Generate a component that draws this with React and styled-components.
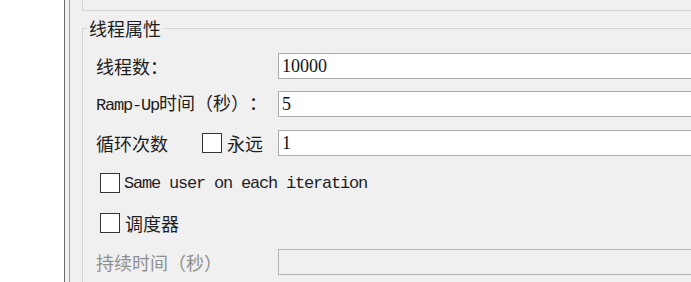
import React from 'react';
import styled, { createGlobalStyle } from 'styled-components';

const GlobalStyle = createGlobalStyle`
  html, body { margin:0; padding:0; background:#f0f0f0; }
  body {
    font-family: "Noto Sans CJK SC", "Liberation Sans", sans-serif;
    text-spacing-trim: space-all;
  }
`;

const Page = styled.div`
  display:flex;
  width:691px;
  height:282px;
  overflow:hidden;
  background:#f0f0f0;
`;

const Blank = styled.div`
  width:64px;
  flex:none;
  background:#fff;
`;

const Splitter = styled.div`
  width:4px;
  flex:none;
  border-left:1px solid #6e6e6e;
  border-right:1px solid #a0a0a0;
  background:#f0f0f0;
`;

const Content = styled.div`
  flex:1;
  min-width:0;
  padding-left:12px;
`;

const TopBox = styled.div`
  height:10px;
  margin-right:-40px;
  border-left:1px solid #d5d5d5;
  border-bottom:1px solid #d5d5d5;
`;

const Group = styled.fieldset`
  margin:7px -40px 0 0;
  padding:15px 0 20px 13px;
  min-inline-size:0;
  border:1px solid #d5d5d5;
  display:flex;
  flex-direction:column;
`;

const Legend = styled.legend`
  margin-left:-9px;
  padding:0 2px;
  font-size:18px;
  line-height:20px;
  color:#1e1e1e;
`;

const Row = styled.div`
  display:flex;
  align-items:center;
  height:26px;
  margin-top:${props => props.gap || 0}px;
  padding-left:${props => props.indent || 0}px;
`;

const LabelCell = styled.div`
  width:182px;
  flex:none;
  display:flex;
  align-items:center;
`;

const Label = styled.span`
  font-size:18px;
  line-height:20px;
  white-space:nowrap;
  color:${props => props.disabled ? '#8f8f8f' : '#1e1e1e'};
`;

const Latin = styled.span`
  font-family:"Liberation Mono", monospace;
  font-size:17px;
  letter-spacing:-1.2px;
`;

const Check = styled.span`
  display:inline-block;
  flex:none;
  box-sizing:border-box;
  width:20px;
  height:20px;
  border:1px solid #333;
  background:#fff;
  margin-left:${props => props.offset || 0}px;
  margin-right:${props => props.space || 4}px;
`;

const Field = styled.input`
  flex:1;
  min-width:0;
  box-sizing:border-box;
  height:26px;
  margin:0;
  padding:0 3px;
  border:1px solid ${props => props.disabled ? '#b4b4b4' : '#ababab'};
  background:${props => props.disabled ? '#f0f0f0' : '#fff'};
  font-family:"Liberation Serif", serif;
  font-size:18px;
  color:#141414;
  outline:none;
`;

const MonoText = styled.span`
  font-family:"Liberation Mono", monospace;
  font-size:17px;
  letter-spacing:-1.2px;
  color:#1e1e1e;
  white-space:nowrap;
`;

export default function App() {
  return (
    <Page>
      <GlobalStyle />
      <Blank />
      <Splitter />
      <Content>
        <TopBox />
        <Group>
          <Legend>线程属性</Legend>
          <Row>
            <LabelCell><Label>线程数：</Label></LabelCell>
            <Field readOnly value="10000" />
          </Row>
          <Row gap={12}>
            <LabelCell><Label><Latin>Ramp-Up</Latin>时间（秒）：</Label></LabelCell>
            <Field readOnly value="5" />
          </Row>
          <Row gap={13}>
            <LabelCell>
              <Label>循环次数</Label>
              <Check offset={34} space={5} />
              <Label>永远</Label>
            </LabelCell>
            <Field readOnly value="1" />
          </Row>
          <Row gap={14} indent={4}>
            <Check />
            <MonoText>Same user on each iteration</MonoText>
          </Row>
          <Row gap={14} indent={4}>
            <Check space={5} />
            <Label>调度器</Label>
          </Row>
          <Row gap={13}>
            <LabelCell><Label disabled>持续时间（秒）</Label></LabelCell>
            <Field disabled value="" readOnly />
          </Row>
        </Group>
      </Content>
    </Page>
  );
}
